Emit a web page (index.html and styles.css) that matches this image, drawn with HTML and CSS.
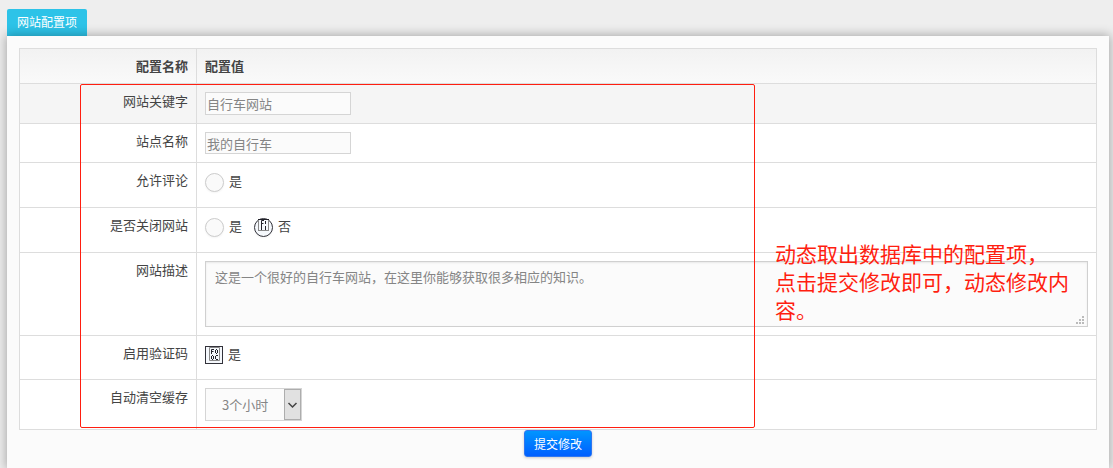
FILE: index.html
```html
<!DOCTYPE html>
<html lang="zh-CN">
<head>
<meta charset="utf-8">
<title>网站配置项</title>
<link rel="stylesheet" href="styles.css">
</head>
<body>
<nav class="tabs"><a class="tab" href="#config">网站配置项</a></nav>
<main class="panel" id="config">
<form class="config">
<table class="grid">
<colgroup><col class="col-name"><col></colgroup>
<thead><tr><th class="name">配置名称</th><th>配置值</th></tr></thead>
<tbody>
<tr class="row-hover"><td class="name"><label for="keyword">网站关键字</label></td><td><input class="field" id="keyword" type="text" value="自行车网站"></td></tr>
<tr><td class="name"><label for="site">站点名称</label></td><td><input class="field" id="site" type="text" value="我的自行车"></td></tr>
<tr><td class="name">允许评论</td><td><div class="options options-radio">
<label class="option"><span class="mark"><input class="radio" type="radio" name="comment"></span>是</label>
</div></td></tr>
<tr><td class="name">是否关闭网站</td><td><div class="options options-radio">
<label class="option"><span class="mark"><input class="radio" type="radio" name="closed"></span>是</label>
<label class="option"><span class="mark"><input class="radio" type="radio" name="closed" checked><svg class="glyph" viewBox="0 0 19 19" aria-hidden="true"><path class="frame" d="M4.500 13V1.500M14.500 1.500V13M4 12.500H15"/><path d="M4 1.500H15M7.500 8V2.500H10M7.500 5.500H9.500M11.500 3V6M7.500 8V12M11.500 8V12"/></svg></span>否</label>
</div></td></tr>
<tr><td class="name"><label for="desc">网站描述</label></td><td><div class="area-wrap"><textarea class="area" id="desc">这是一个很好的自行车网站，在这里你能够获取很多相应的知识。</textarea><svg class="grip" viewBox="0 0 8 8" aria-hidden="true"><path d="M6 0h2v2H6zM3 3h2v2H3zM6 3h2v2H6zM0 6h2v2H0zM3 6h2v2H3zM6 6h2v2H6z"/></svg></div></td></tr>
<tr><td class="name">启用验证码</td><td><div class="options options-check">
<label class="option"><span class="mark"><input class="check" type="checkbox" checked><svg class="glyph glyph-check" viewBox="0 0 18 18" aria-hidden="true"><path class="frame" d="M4.500 1.500H14.500V14.500H4.500Z"/><path d="M6.500 8V3.500H9M6.500 5.500H8.500M10.500 4V7M12.500 4V7M11 3.500H12M11 7.500H12M6.500 10V13M8.500 10V13M7 9.500H8M7 13.500H8M10.500 10V13M11 9.500H13M11 13.500H13"/></svg></span>是</label>
</div></td></tr>
<tr><td class="name"><label for="cache">自动清空缓存</label></td><td><div class="select-wrap"><select class="select" id="cache"><option>3个小时</option></select><svg class="arrow" viewBox="0 0 17 31" aria-hidden="true"><rect x=".5" y=".5" width="16" height="30"/><path d="M4.500 14L8.500 18L12.500 14"/></svg></div></td></tr>
</tbody>
</table>
<div class="actions"><button class="submit" type="submit">提交修改</button></div>
<div class="outline"></div>
<p class="note">动态取出数据库中的配置项，<br>点击提交修改即可，动态修改内容。</p>
</form>
</main>
</body>
</html>
```
FILE: styles.css
```css
* { box-sizing: border-box; }
html { height: 100%; }
body {
  display: flex;
  flex-direction: column;
  min-height: 100%;
  margin: 0;
  padding: 9px 4px 0 7px;
  overflow-x: hidden;
  background: #eee;
  color: #444;
  font: 13px/18px "Noto Sans CJK SC", sans-serif;
}
input, textarea, select, button { margin: 0; font: inherit; }
.tabs { display: flex; }
.tab {
  padding: 4px 10px 5px;
  border-radius: 2px 2px 0 0;
  background: #2dc3e8;
  color: #fff;
  font-size: 12px;
  text-decoration: none;
}
.panel {
  flex: 1;
  padding: 12px 12px 0;
  background: #fbfbfb;
  box-shadow: 0 0 10px 1px rgba(0, 0, 0, .3);
}
.config { position: relative; }
.grid {
  width: 100%;
  table-layout: fixed;
  border-collapse: collapse;
  background: #fff;
}
.col-name { width: 177px; }
.grid th, .grid td {
  padding: 8px;
  border: 1px solid #ddd;
  text-align: left;
  vertical-align: top;
}
.grid thead { background: linear-gradient(#f2f2f2, #fafafa); }
.grid .name { text-align: right; }
.row-hover { height: 40px; background: #f5f5f5; }
.field {
  display: block;
  width: 146px;
  height: 22px;
  padding: 1px;
  border: 1px solid #d5d5d5;
  border-radius: 0;
  background: #fbfbfb;
  color: #858585;
}
.row-hover .field { height: 23px; }
.options { display: flex; gap: 12px; align-items: flex-start; }
.options-radio { height: 28px; padding-top: 2px; }
.options-check { height: 27px; padding-top: 2px; }
.option { display: flex; align-items: flex-start; gap: 5px; line-height: 16px; }
.mark { display: grid; }
.mark > * { grid-area: 1 / 1; }
.radio {
  appearance: none;
  width: 19px;
  height: 19px;
  border: 1px solid #ccc;
  border-radius: 50%;
  background: #fafafa;
  box-shadow: 0 1px 2px rgba(0, 0, 0, .05);
}
.radio:checked { border-color: #32323a; background: #f5f8fc; }
.check {
  appearance: none;
  width: 18px;
  height: 18px;
  border: 1px solid #32323a;
  background: #f5f8fc;
}
.glyph { width: 19px; height: 19px; fill: none; stroke: #22222a; pointer-events: none; }
.glyph-check { width: 18px; height: 18px; }
.glyph .frame { stroke: #888; }
.area-wrap { display: grid; }
.area-wrap > * { grid-area: 1 / 1; }
.area {
  width: 100%;
  height: 66px;
  padding: 6px 9px;
  border: 1px solid #d0d0d0;
  border-radius: 0;
  background: #fbfbfb;
  box-shadow: inset 0 1px 2px rgba(0, 0, 0, .08);
  color: #858585;
  resize: none;
}
.grip { place-self: end; width: 8px; height: 8px; margin: 3px 4px; fill: #bbb; }
.select-wrap { display: inline-grid; vertical-align: top; }
.select-wrap > * { grid-area: 1 / 1; }
.select {
  appearance: none;
  width: 97px;
  height: 33px;
  padding: 0 16px;
  border: 1px solid #d5d5d5;
  border-radius: 0;
  background: #fbfbfb;
  color: #858585;
}
.arrow {
  place-self: center end;
  width: 17px;
  height: 31px;
  margin-right: 1px;
  fill: #e1e1e1;
  stroke: #adadad;
  pointer-events: none;
}
.arrow path { fill: none; stroke: #444; stroke-width: 1.5; }
.actions { display: flex; justify-content: center; }
.submit {
  height: 27px;
  padding: 0 9px;
  border: 1px solid #2f76f0;
  border-radius: 3px;
  background: linear-gradient(#0095ff, #005fff);
  box-shadow: 0 1px 3px rgba(0, 0, 0, .2);
  color: #fff;
  font-size: 12px;
}
.outline {
  position: absolute;
  top: 36px;
  left: 61px;
  width: 675px;
  height: 344px;
  border: 1px solid #ff1e10;
  border-radius: 2px;
  pointer-events: none;
}
.note {
  position: absolute;
  top: 191px;
  left: 756px;
  width: 300px;
  margin: 0;
  color: #ff1e10;
  font-size: 21px;
  line-height: 28px;
  pointer-events: none;
}
```
